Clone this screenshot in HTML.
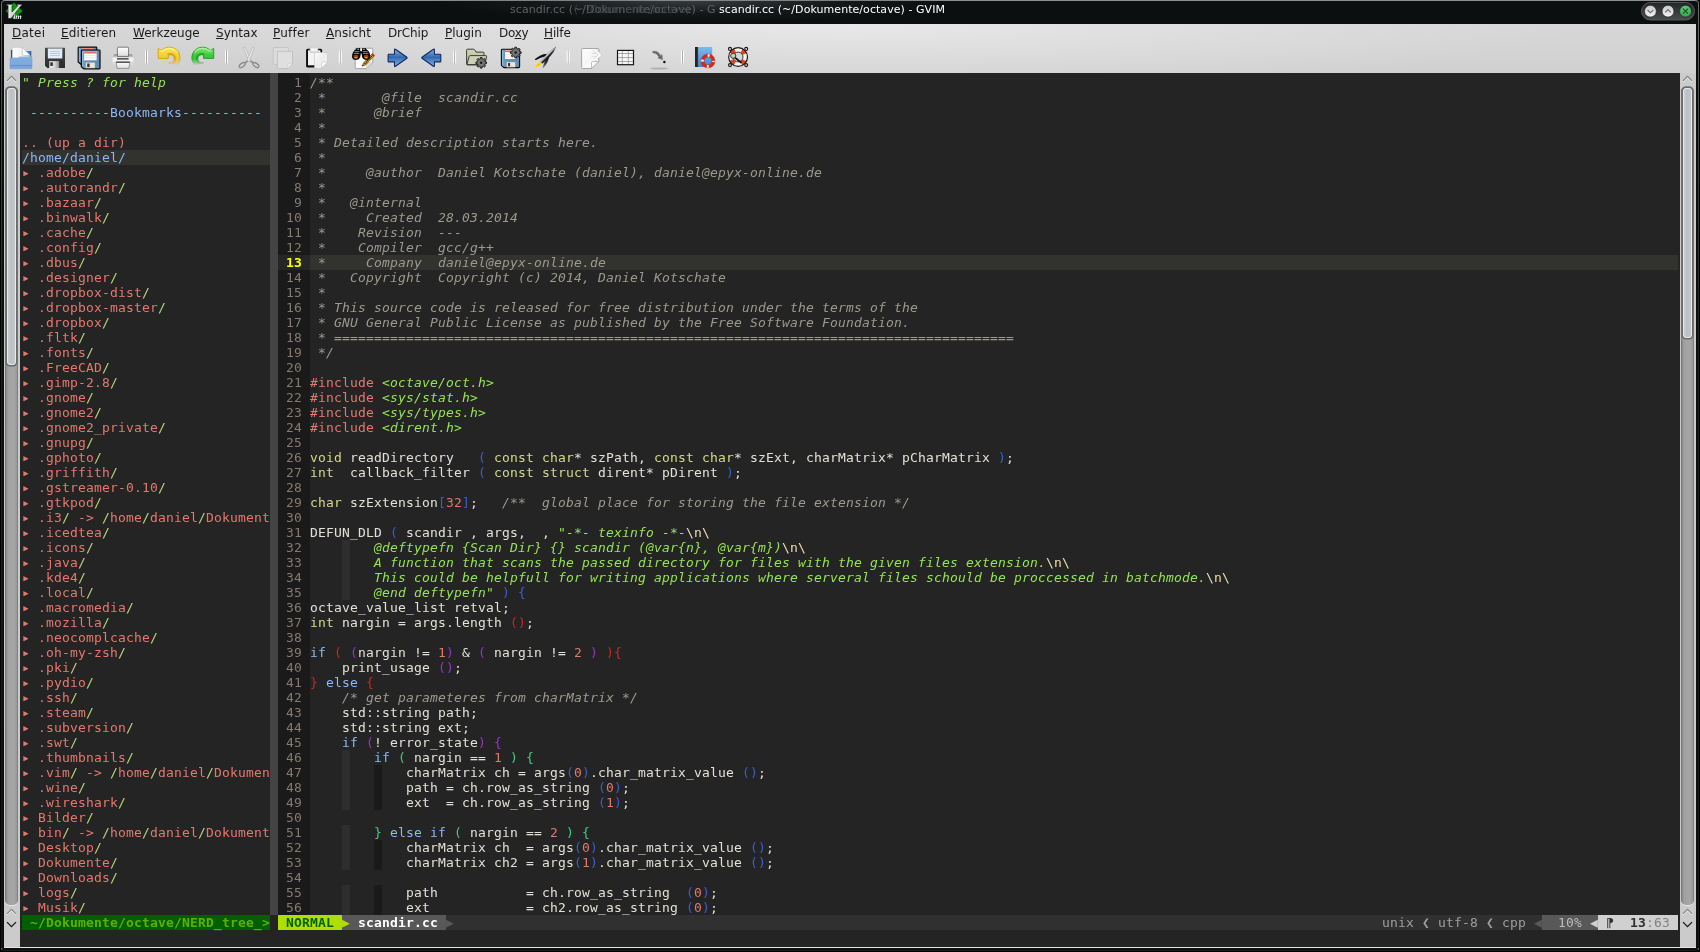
<!DOCTYPE html>
<html><head><meta charset="utf-8"><title>scandir.cc (~/Dokumente/octave) - GVIM</title>
<style>
html,body{margin:0;padding:0;width:1700px;height:952px;overflow:hidden;background:#000}
#win{position:absolute;left:0;top:0;width:1700px;height:952px;background:#020303;overflow:hidden;will-change:transform;filter:grayscale(0)}
#frame{position:absolute;left:1px;top:0;width:1696px;height:949px;border:1px solid #6a6e6f;border-top-color:#8c8f90;border-bottom-color:#181c1d;border-radius:4px 4px 3px 3px;background:#0c0f10}
.fade{position:absolute;top:6px;width:1px;height:942px;background:linear-gradient(rgba(12,15,16,0) 0,rgba(12,15,16,.35) 90px,rgba(12,15,16,.8) 330px,rgba(12,15,16,.93) 100%)}
#title{position:absolute;left:0;top:0;width:1700px;height:24px}
#title .glow{position:absolute;left:430px;top:0;width:520px;height:24px;background:radial-gradient(ellipse 260px 22px at 50% 0,rgba(120,125,128,.42),rgba(60,64,66,.18) 60%,rgba(0,0,0,0) 100%)}
#title .tt{position:absolute;top:2px;height:16px;font:11px/16px "DejaVu Sans","Liberation Sans",sans-serif;letter-spacing:.055px;white-space:pre}
#chrome{position:absolute;left:4px;top:24px;width:1692px;height:924px;background:#d4d4d4;border-bottom:1px solid #e4e4e4;border-right:1px solid #dcdcdc;box-sizing:border-box}
#menubar{position:absolute;left:0;top:0;width:1692px;height:49px;background:radial-gradient(ellipse 720px 70px at 50% 0,rgba(232,232,232,1),rgba(226,226,226,.6) 50%,rgba(220,220,220,0) 100%),linear-gradient(#d7d7d7,#d0d0d0)}
.mi{position:absolute;top:1px;height:16px;font:12px/16px "DejaVu Sans","Liberation Sans",sans-serif;color:#1a1a1a;white-space:pre}
.mi u{text-decoration:underline;text-underline-offset:1px}
.ic{position:absolute;top:23px;width:22px;height:22px}
.sep{position:absolute;top:25px;width:2px;height:17px;background:linear-gradient(90deg,#bdbdbd 0 1px,#ececec 1px 2px);border-radius:1px}
#ed{position:absolute;left:20px;top:73px;width:1660px;height:874px;background:#242424}
.r{position:absolute;height:15px;white-space:pre;font:13px/15px "DejaVu Sans Mono","Liberation Mono",monospace;letter-spacing:0.1733px;color:#e3e0d7}
.r span,.r b,.r i{font:inherit}
.r b{font-weight:bold}
.c{color:#9c998e;font-style:italic!important}
.s{color:#95e454;font-style:italic!important}
.g{color:#95e454;font-weight:normal!important}
.t{color:#d4d987}.k{color:#88b8f6}.n{color:#e5786d}.d{color:#e5786d}.sp{color:#eadead}
.sl{color:#b9d678;font-style:normal!important}
.pb{color:#3a5fcd}.pr{color:#cd2626}.pv{color:#9a32cd}.pg{color:#43cd80}
.ln{color:#857b6f;text-align:right}
.bx{position:absolute}
</style></head><body><div id="win"><div id="frame"></div><div class="fade" style="left:1px"></div><div class="fade" style="left:1698px"></div>

<div id="title"><div class="glow"></div>
<span class="tt" style="left:510px;color:#5e6365">scandir.cc (~/Dokumente/octave) - G</span>
<span class="tt" style="left:574px;color:#3d4244;font-size:10px">(~/Dokumente/octave)</span>
<span class="tt" style="left:719px;color:#ffffff">scandir.cc (~/Dokumente/octave) - GVIM</span>
<svg style="position:absolute;left:5px;top:1.5px" width="18" height="18" viewBox="0 0 18 18">
<polygon points="9,0.3 17.7,9 9,17.7 0.3,9" fill="#009a00" stroke="#06063a" stroke-width="0.7"/>
<polygon points="9,0.8 17.2,9 9,12 0.8,9" fill="#00a800" opacity=".6"/>
<polygon points="1.7,2.3 8.1,2.3 8.1,3.7 7,3.7 7,10 12.8,3.7 12,3.7 12,2.3 16.9,2.3 16.9,3.7 16,3.7 6,16.5 3.2,16.5 3.2,3.7 1.7,3.7" fill="#d9d9d9" stroke="#1a1a1a" stroke-width="0.6"/>
<polygon points="3.6,3 5.2,3 5.2,16 3.6,16" fill="#f2f2f2" opacity=".7"/>
<text x="8.2" y="16.6" font-family="DejaVu Sans,Liberation Sans,sans-serif" font-size="6.2" font-style="italic" font-weight="bold" fill="#ececec" stroke="#111" stroke-width="0.3" paint-order="stroke">im</text>
</svg>
<svg style="position:absolute;left:1638px;top:0px" width="60" height="24" viewBox="0 0 60 24">
<defs>
<linearGradient id="pill" x1="0" y1="0" x2="0" y2="1"><stop offset="0" stop-color="#232526"/><stop offset="1" stop-color="#4a4c4d"/></linearGradient>
<linearGradient id="wb" x1="0" y1="0" x2="0" y2="1"><stop offset="0" stop-color="#c9c9c9"/><stop offset="1" stop-color="#f4f4f4"/></linearGradient>
<linearGradient id="gb" x1="0" y1="0" x2="0" y2="1"><stop offset="0" stop-color="#5ec878"/><stop offset="1" stop-color="#38a852"/></linearGradient>
</defs>
<rect x="3.5" y="2.5" width="53" height="17.5" rx="8.75" fill="url(#pill)" stroke="#55585a" stroke-width="1"/>
<circle cx="12.4" cy="11.2" r="5.9" fill="url(#wb)" stroke="#1c1c1c" stroke-width="0.6"/>
<circle cx="30" cy="11.2" r="5.9" fill="url(#wb)" stroke="#1c1c1c" stroke-width="0.6"/>
<circle cx="47.5" cy="11.2" r="5.9" fill="url(#gb)" stroke="#2a1418" stroke-width="0.6"/>
<path d="M9.6 10 L12.4 12.8 L15.2 10" fill="none" stroke="#6a6a6a" stroke-width="1.1"/>
<path d="M27.2 12.4 L30 9.6 L32.8 12.4" fill="none" stroke="#6a6a6a" stroke-width="1.1"/>
<path d="M45 8.7 L50 13.7 M50 8.7 L45 13.7" fill="none" stroke="#0d5a22" stroke-width="1.2"/>
</svg>
</div>
<div id="chrome"><div id="menubar">
<span class="mi" style="left:8px;letter-spacing:0.25px"><u>D</u>atei</span>
<span class="mi" style="left:57px;letter-spacing:0.2px"><u>E</u>ditieren</span>
<span class="mi" style="left:129px"><u>W</u>erkzeuge</span>
<span class="mi" style="left:212px"><u>S</u>yntax</span>
<span class="mi" style="left:269px;letter-spacing:0.23px"><u>P</u>uffer</span>
<span class="mi" style="left:322px;letter-spacing:0.1px"><u>A</u>nsicht</span>
<span class="mi" style="left:384px;letter-spacing:-0.15px">DrChip</span>
<span class="mi" style="left:441px"><u>P</u>lugin</span>
<span class="mi" style="left:495px;letter-spacing:-0.3px">Do<u>x</u>y</span>
<span class="mi" style="left:540px;letter-spacing:-0.12px"><u>H</u>ilfe</span>
<svg style="position:absolute;left:0;top:20px" width="800" height="29" viewBox="4 44 800 29"><defs>
<linearGradient id="fold" x1="0" y1="0" x2="0" y2="1"><stop offset="0" stop-color="#9cc0ea"/><stop offset=".12" stop-color="#82addf"/><stop offset="1" stop-color="#7aa6db"/></linearGradient>
<linearGradient id="pap" x1="0" y1="0" x2="1" y2="0"><stop offset="0" stop-color="#ffffff"/><stop offset=".45" stop-color="#f4f4f4"/><stop offset="1" stop-color="#cfcfcf"/></linearGradient>
<linearGradient id="flop" x1="0" y1="0" x2="0" y2="1"><stop offset="0" stop-color="#4a4a4a"/><stop offset="1" stop-color="#2b2b2b"/></linearGradient>
<linearGradient id="shut" x1="0" y1="0" x2="1" y2="0"><stop offset="0" stop-color="#f0f0f0"/><stop offset=".6" stop-color="#d0d0d0"/><stop offset="1" stop-color="#8e8e8e"/></linearGradient>
<linearGradient id="bfl" x1="0" y1="0" x2="1" y2="0"><stop offset="0" stop-color="#a8cbe8"/><stop offset=".14" stop-color="#6b98c0"/><stop offset="1" stop-color="#5d8bb4"/></linearGradient>
<linearGradient id="redl" x1="0" y1="0" x2="0" y2="1"><stop offset="0" stop-color="#f0a090"/><stop offset="1" stop-color="#d85a48"/></linearGradient>
<linearGradient id="prp" x1="0" y1="0" x2="0" y2="1"><stop offset="0" stop-color="#ffffff"/><stop offset="1" stop-color="#dcdce0"/></linearGradient>
<linearGradient id="prb" x1="0" y1="0" x2="0" y2="1"><stop offset="0" stop-color="#8a8a8a"/><stop offset="1" stop-color="#c8c8c8"/></linearGradient>
<linearGradient id="und" x1="0" y1="0" x2="0" y2="1"><stop offset="0" stop-color="#f8ea60"/><stop offset=".5" stop-color="#f3d030"/><stop offset="1" stop-color="#ecc018"/></linearGradient>
<linearGradient id="red" x1="0" y1="0" x2="0" y2="1"><stop offset="0" stop-color="#8ae87a"/><stop offset=".45" stop-color="#3ccc3c"/><stop offset="1" stop-color="#30b830"/></linearGradient>
<linearGradient id="fadeY" x1="0" y1="0" x2="0" y2="1"><stop offset="0" stop-color="#fff"/><stop offset=".62" stop-color="#fff"/><stop offset="1" stop-color="#000"/></linearGradient>
<mask id="mU" maskUnits="userSpaceOnUse" x="150" y="44" width="70" height="28"><rect x="150" y="44" width="70" height="28" fill="url(#fd2)"/></mask>
<linearGradient id="fd2" x1="0" y1="0" x2="0" y2="1"><stop offset="0" stop-color="#fff"/><stop offset=".52" stop-color="#fff"/><stop offset=".775" stop-color="#000"/><stop offset="1" stop-color="#000"/></linearGradient>
<linearGradient id="arw" x1="0" y1="0" x2="0" y2="1"><stop offset="0" stop-color="#8ab6e2"/><stop offset=".48" stop-color="#3366aa"/><stop offset=".56" stop-color="#4378bb"/><stop offset="1" stop-color="#82b2e8"/></linearGradient>
<linearGradient id="pg" x1="0" y1="0" x2="1" y2="1"><stop offset="0" stop-color="#fdfdfd"/><stop offset=".5" stop-color="#ececec"/><stop offset="1" stop-color="#fafafa"/></linearGradient>
<linearGradient id="pg2" x1="0" y1="0" x2="1" y2="1"><stop offset="0" stop-color="#ffffff"/><stop offset=".5" stop-color="#f6f6f6"/><stop offset="1" stop-color="#ffffff"/></linearGradient><linearGradient id="rkb" gradientUnits="userSpaceOnUse" x1="546.6" y1="53.4" x2="549.6" y2="56.4"><stop offset="0" stop-color="#b4b8be"/><stop offset=".18" stop-color="#ffffff"/><stop offset=".42" stop-color="#d4d8dc"/><stop offset=".6" stop-color="#5a5e64"/><stop offset=".8" stop-color="#1c1e22"/><stop offset="1" stop-color="#101012"/></linearGradient><linearGradient id="rkf" x1="0" y1="0" x2="0" y2="1"><stop offset="0" stop-color="#0c0c0c"/><stop offset=".55" stop-color="#2c2e32"/><stop offset="1" stop-color="#8e9298"/></linearGradient><linearGradient id="oliv" x1="0" y1="0" x2="0" y2="1"><stop offset="0" stop-color="#d0d4b8"/><stop offset="1" stop-color="#b4b898"/></linearGradient>
<radialGradient id="gear"><stop offset="0" stop-color="#8c8c8c"/><stop offset="1" stop-color="#5a5a5a"/></radialGradient>
<linearGradient id="book" x1="0" y1="0" x2="0" y2="1"><stop offset="0" stop-color="#7ebaea"/><stop offset="1" stop-color="#3d88d0"/></linearGradient>
<linearGradient id="sepg" x1="0" y1="0" x2="0" y2="1"><stop offset="0" stop-color="#fff" stop-opacity="0"/><stop offset=".25" stop-color="#fff" stop-opacity="1"/><stop offset=".75" stop-color="#fff" stop-opacity="1"/><stop offset="1" stop-color="#fff" stop-opacity="0"/></linearGradient>
<linearGradient id="sepd" x1="0" y1="0" x2="0" y2="1"><stop offset="0" stop-color="#9a9a9a" stop-opacity="0"/><stop offset=".25" stop-color="#a8a8a8" stop-opacity="1"/><stop offset=".75" stop-color="#a8a8a8" stop-opacity="1"/><stop offset="1" stop-color="#9a9a9a" stop-opacity="0"/></linearGradient>
</defs><rect x="146" y="48.5" width="1" height="16.8" fill="url(#sepd)"/><rect x="145" y="48.5" width="1" height="16.8" fill="url(#sepg)"/><rect x="147" y="48.5" width="1" height="16.8" fill="url(#sepg)"/><rect x="226" y="48.5" width="1" height="16.8" fill="url(#sepd)"/><rect x="225" y="48.5" width="1" height="16.8" fill="url(#sepg)"/><rect x="227" y="48.5" width="1" height="16.8" fill="url(#sepg)"/><rect x="339.8" y="48.5" width="1" height="16.8" fill="url(#sepd)"/><rect x="338.8" y="48.5" width="1" height="16.8" fill="url(#sepg)"/><rect x="340.8" y="48.5" width="1" height="16.8" fill="url(#sepg)"/><rect x="454.1" y="48.5" width="1" height="16.8" fill="url(#sepd)"/><rect x="453.1" y="48.5" width="1" height="16.8" fill="url(#sepg)"/><rect x="455.1" y="48.5" width="1" height="16.8" fill="url(#sepg)"/><rect x="567.7" y="48.5" width="1" height="16.8" fill="url(#sepd)"/><rect x="566.7" y="48.5" width="1" height="16.8" fill="url(#sepg)"/><rect x="568.7" y="48.5" width="1" height="16.8" fill="url(#sepg)"/><rect x="682" y="48.5" width="1" height="16.8" fill="url(#sepd)"/><rect x="681" y="48.5" width="1" height="16.8" fill="url(#sepg)"/><rect x="683" y="48.5" width="1" height="16.8" fill="url(#sepg)"/><g>
<path d="M10.9 50 h2 v9 h-2z" fill="#1d4a8c"/><path d="M25.5 51 h5.6 v8 h-5.6z" fill="#4a80c8"/><path d="M30.4 51.2 h0.8 v7 h-0.8z" fill="#1d4a8c"/>
<path d="M12.3 47.3 h10 l7.9 8.6 v3 h-17.9z" fill="url(#pap)" stroke="#b9b9b9" stroke-width="0.5"/>
<path d="M22.3 47.3 v6.2 q0 2 2 2 h5.9z" fill="#fdfdfd" stroke="#a8a8a8" stroke-width="0.5"/>
<path d="M10 58.6 q0-.7 .7-.7 h7.3 l1-.9 h12.3 q.7 0 .7 .7 v10 q0 1-1 1 h-20 q-1 0-1-1z" fill="url(#fold)" stroke="#6f9bd2" stroke-width="0.5"/>
<path d="M10.2 65.6 h21.6" stroke="#5b8cc8" stroke-width="0.9"/>
</g>
<g>
<path d="M45.6 47.8 h18.8 q.6 0 .6 .6 v19 q0 .6-.6 .6 h-17 l-2.4-2.2 v-17.4 q0-.6 .6-.6z" fill="url(#flop)"/>
<rect x="48" y="48.7" width="14.1" height="9.5" fill="#e6eff9" stroke="#c5d3e2" stroke-width="0.4"/>
<path d="M50 51.4 h10 M50 53.5 h10 M50 55.6 h10" stroke="#a3bbd8" stroke-width="0.8"/>
<rect x="49.3" y="61.1" width="9.8" height="6.9" fill="url(#shut)"/>
<rect x="50.3" y="62.3" width="2.5" height="3.6" fill="#2e2e2e"/>
<rect x="60.5" y="61.3" width="1.4" height="2" fill="#222"/>
</g>
<g>
<path d="M79 47.2 h17 q.8 0 .8 .8 v17 h-15 l-3.6-3 v-14 q0-.8 .8-.8z" fill="url(#bfl)" stroke="#0a0a0a" stroke-width="1.2" stroke-linejoin="round"/>
<rect x="81.6" y="48" width="12" height="2.2" fill="url(#redl)"/>
<path d="M82.2 50 h17 q.8 0 .8 .8 v17.2 q0 .8-.8 .8 h-15.5 l-2.3-2 v-16 q0-.8 .8-.8z" fill="url(#bfl)" stroke="#0a0a0a" stroke-width="1.2" stroke-linejoin="round"/>
<rect x="84.2" y="51" width="12.4" height="9.3" fill="#ffffff"/>
<rect x="84.2" y="51" width="12.4" height="2.5" fill="url(#redl)"/>
<path d="M84.2 55.6 h12.4 M84.2 57.8 h12.4" stroke="#dcdcdc" stroke-width="0.7"/>
<rect x="85.7" y="62.4" width="9.3" height="5.7" rx="0.6" fill="#ebe7db" stroke="#9a9a90" stroke-width="0.4"/>
<rect x="87.2" y="63.5" width="2.4" height="3.6" fill="#3a3832"/>
</g>
<g>
<path d="M112.4 57.2 l1.8-3 h17.6 l1.8 3z" fill="url(#prb)"/>
<rect x="112.2" y="57.2" width="21.6" height="5" rx="0.6" fill="#f1f1f1" stroke="#d0d0d0" stroke-width="0.4"/>
<path d="M112.4 62.2 h21.2 l-.6 2.6 h-20z" fill="#dadade"/>
<rect x="117" y="58.1" width="11.6" height="1.5" fill="#4a4a4a"/>
<path d="M117.4 56.4 v-8.2 q0-1 1-1 h9.2 q1 0 1 1 v8.2z" fill="url(#prp)" stroke="#4e4e4e" stroke-width="0.7"/>
<path d="M116.2 62 h13.6 l-.9 6.4 h-11.8z" fill="url(#prp)" stroke="#555" stroke-width="0.5"/>
<path d="M116.2 62.2 h13.6" stroke="#2e2e2e" stroke-width="1.1"/>
</g>
<g mask="url(#mU)"><path d="M158.2 48.5 L161.6 50.4 C164 48 166.5 47.2 169.3 47.2 C173 47.2 176.2 48.8 178.2 51.8 C180 54.5 180.5 58 179.4 61.3 C178.9 62.7 178.2 63.8 177.2 64.8 L168.3 62.9 C170 63 171.6 62.6 172.8 61.5 C174 60.4 174.4 58.8 173.9 57.3 C173.3 55.6 171.6 54.6 169.8 54.7 C169.2 54.7 168.7 54.9 168.3 55.2 L168.3 58.4 L158.2 58.4 Z" fill="url(#und)" stroke="#d2a400" stroke-width="0.9" stroke-linejoin="round"/><path d="M167.4 54.6 C169 53.6 171.2 53.5 172.9 54.5 C174.8 55.7 175.6 57.8 175.1 59.9 C174.7 61.5 173.6 62.8 172.2 63.4" fill="none" stroke="#e8961a" stroke-width="1.8" opacity=".8"/><path d="M160.2 50.3 L162 51.4 C164 49.4 166.6 48.4 169.3 48.4 C172.6 48.4 175.4 49.9 177.2 52.4" fill="none" stroke="#fdf58a" stroke-width="1.1" opacity=".85"/></g>
<g mask="url(#mU)" transform="translate(371.9,0) scale(-1,1)"><path d="M158.2 48.5 L161.6 50.4 C164 48 166.5 47.2 169.3 47.2 C173 47.2 176.2 48.8 178.2 51.8 C180 54.5 180.5 58 179.4 61.3 C178.9 62.7 178.2 63.8 177.2 64.8 L168.3 62.9 C170 63 171.6 62.6 172.8 61.5 C174 60.4 174.4 58.8 173.9 57.3 C173.3 55.6 171.6 54.6 169.8 54.7 C169.2 54.7 168.7 54.9 168.3 55.2 L168.3 58.4 L158.2 58.4 Z" fill="url(#red)" stroke="#1f9a1f" stroke-width="0.9" stroke-linejoin="round"/><path d="M167.4 54.6 C169 53.6 171.2 53.5 172.9 54.5 C174.8 55.7 175.6 57.8 175.1 59.9 C174.7 61.5 173.6 62.8 172.2 63.4" fill="none" stroke="#16aa16" stroke-width="1.8" opacity=".8"/><path d="M160.2 50.3 L162 51.4 C164 49.4 166.6 48.4 169.3 48.4 C172.6 48.4 175.4 49.9 177.2 52.4" fill="none" stroke="#b6f6a6" stroke-width="1.1" opacity=".85"/></g>
<g>
<path d="M243.5 47.6 l1.7-.4 l5.9 13.6 l-1.9 .9z" fill="#ececec" stroke="#adadad" stroke-width="0.6"/>
<path d="M254.4 47.6 l-1.7-.4 l-5.9 13.6 l1.9 .9z" fill="#ececec" stroke="#adadad" stroke-width="0.6"/>
<ellipse cx="242.2" cy="65.1" rx="3.4" ry="1.8" transform="rotate(-36 242.2 65.1)" fill="none" stroke="#8c8c8c" stroke-width="1.3"/>
<ellipse cx="255.9" cy="65.1" rx="3.4" ry="1.8" transform="rotate(36 255.9 65.1)" fill="none" stroke="#8c8c8c" stroke-width="1.3"/>
<path d="M244.8 63.2 l2.9-2.3 M253.3 63.2 l-2.9-2.3" stroke="#8c8c8c" stroke-width="1.7"/>
</g>
<g>
<rect x="273.3" y="47.5" width="15.3" height="16.8" rx="0.8" fill="#dcdcdc" stroke="#bdbdbd" stroke-width="0.7"/>
<path d="M277.4 52 q0-.7 .7-.7 h13.7 q.7 0 .7 .7 v11.6 l-5 4.9 h-9.4 q-.7 0-.7-.7z" fill="#dfdfdf" stroke="#b8b8b8" stroke-width="0.7"/>
<path d="M292.5 63.6 q-3.6-.6-4.3 .4 q-.8 1 -.7 4.5z" fill="#efefef" stroke="#bcbcbc" stroke-width="0.4"/>
</g>
<g>
<path d="M307.6 48.8 h13 q1.5 0 1.5 1.5 v15.7 q0 1.5-1.5 1.5 h-13 q-1.5 0-1.5-1.5 v-15.7 q0-1.5 1.5-1.5z" fill="#0c0c0c"/>
<rect x="308" y="50.3" width="12.4" height="15" fill="#f3f3f3"/>
<path d="M310 52.4 v-4.4 q0-.9 .9-.9 h6.2 q.9 0 .9 .9 v4.4z" fill="#e2e2e2" stroke="#bdbdbd" stroke-width="0.6"/>
<rect x="311.2" y="48.6" width="5.6" height="2.2" fill="#f6f6f6"/>
<path d="M314.5 53.2 q0-.7 .7-.7 h11.7 q.7 0 .7 .7 v8.8 l-6.2 6.5 h-6.2 q-.7 0-.7-.7z" fill="url(#pg)" stroke="#bfbfbf" stroke-width="0.6"/>
<path d="M327.6 62 q-4.4-.6-5.3 .5 q-1 1.1 -.9 6z" fill="#ffffff" stroke="#b0b0b0" stroke-width="0.5"/>
</g>
<g>
<path d="M355.2 49 q0-.8 .8-.8 h16 q.8 0 .8 .8 v13.6 l-6.2 6 h-10.6 q-.8 0-.8-.8z" fill="#fcfcfc" stroke="#9c9c9c" stroke-width="0.9"/>
<path d="M372.8 62.6 l-6.2 6 v-5.2 q0-.8 .8-.8z" fill="#dedede" stroke="#b4b4b4" stroke-width="0.4"/>
<path d="M362.2 66.1 l1.3-3.1 l8.6-9.2 l2.2 2 l-8.7 9.1z" fill="#e8b000" stroke="#1a1a2c" stroke-width="0.6"/>
<path d="M364.6 63.9 l8.3-8.9" stroke="#14143a" stroke-width="1.1" stroke-dasharray="1.2 .7"/>
<path d="M362.2 66.1 l.5-1.3 l.9 .8z" fill="#222"/>
<path d="M371.3 54.7 l1.4-1.5 l2.2 2 l-1.4 1.5z" fill="#e02424"/>
<path d="M356.7 48 h3.3 l.4 3 q.5 1.4 .3 3.2 l-.6 3.3 q-1 2.4-4 2.4 q-3.7 0-4.1-2.9 q-.2-3 1.5-5.4 q1.1-1.6 2.2-2z" fill="#0a0a0a"/>
<path d="M356.7 48 h3.3 l.4 3 q.5 1.4 .3 3.2 l-.6 3.3 q-1 2.4-4 2.4 q-3.7 0-4.1-2.9 q-.2-3 1.5-5.4 q1.1-1.6 2.2-2z" fill="#0a0a0a" transform="translate(722.3,0) scale(-1,1)"/>
<rect x="360" y="51.3" width="2.4" height="2.2" fill="#0a0a0a"/>
<path d="M354.6 51.6 h4.6 M363 51.6 h4.6 M353.8 53.4 h5.4 M363 53.4 h5.4" stroke="#b8b8b8" stroke-width="0.7"/>
<path d="M357.4 49.2 h1.6 M363.2 49.2 h1.6" stroke="#f0f0f0" stroke-width="0.9"/>
<ellipse cx="355.9" cy="56.7" rx="2.4" ry="2" fill="#9c4608"/><ellipse cx="366.2" cy="56.7" rx="2.4" ry="2" fill="#9c4608"/>
<ellipse cx="355.9" cy="57.6" rx="1.5" ry=".8" fill="#dc8a4c"/><ellipse cx="366.2" cy="57.6" rx="1.5" ry=".8" fill="#dc8a4c"/>
</g>
<path d="M388.8 54.2 h5.7 v-4.4 q0-1.3 1-.5 l11.4 8 q.5 .5 0 1 l-11.4 8 q-1 .8-1-.5 v-3.9 h-5.7 q-.7 0-.7-.7 v-6.3 q0-.7 .7-.7z" fill="url(#arw)" stroke="#0f2b62" stroke-width="1.1" stroke-linejoin="round"/>
<path d="M388.8 54.2 h5.7 v-4.4 q0-1.3 1-.5 l11.4 8 q.5 .5 0 1 l-11.4 8 q-1 .8-1-.5 v-3.9 h-5.7 q-.7 0-.7-.7 v-6.3 q0-.7 .7-.7z" fill="url(#arw)" stroke="#0f2b62" stroke-width="1.1" stroke-linejoin="round" transform="translate(828.9,0) scale(-1,1)"/>
<g>
<path d="M466.6 50.2 q0-1 1-1 h6 q.8 0 1.2 .7 l1.2 2.2 h7 q1 0 1 1 v10.8 q0 1-1 1 h-15.4 q-1 0-1-1z" fill="url(#oliv)" stroke="#2c2c28" stroke-width="0.9"/>
<path d="M467 64.3 l2.2-8 q.2-.7 1-.7 h15.6 q1 0 .8 1 l-1.6 7.2 q-.2 .8-1 .8 h-16.4z" fill="#cdd1b4" stroke="#2c2c28" stroke-width="0.9"/>
</g><polygon points="486.53,61.96 486.53,63.64 485.07,63.79 484.64,64.83 485.57,65.97 484.37,67.17 483.23,66.24 482.19,66.67 482.04,68.13 480.36,68.13 480.21,66.67 479.17,66.24 478.03,67.17 476.83,65.97 477.76,64.83 477.33,63.79 475.87,63.64 475.87,61.96 477.33,61.81 477.76,60.77 476.83,59.63 478.03,58.43 479.17,59.36 480.21,58.93 480.36,57.47 482.04,57.47 482.19,58.93 483.23,59.36 484.37,58.43 485.57,59.63 484.64,60.77 485.07,61.81" fill="url(#gear)" stroke="#1e1e1e" stroke-width="0.9" stroke-linejoin="round"/><circle cx="481.2" cy="62.8" r="1.296" fill="#1a1a1a"/>
<g>
<path d="M502.2 49.2 h16.6 q.8 0 .8 .8 v16.8 q0 .8-.8 .8 h-15 l-2.4-2.2 v-15.4 q0-.8 .8-.8z" fill="url(#bfl)" stroke="#0a0a0a" stroke-width="1.1" stroke-linejoin="round"/>
<rect x="505" y="50.2" width="11" height="8.8" fill="#ffffff"/>
<rect x="505" y="50.2" width="11" height="2" fill="url(#redl)"/>
<path d="M505 54.6 h11 M505 56.8 h11" stroke="#dcdcdc" stroke-width="0.7"/>
<rect x="506.5" y="62" width="8.9" height="5.2" rx="0.5" fill="#ebe7db" stroke="#8c8c84" stroke-width="0.4"/>
<rect x="508" y="63" width="2.1" height="3.3" fill="#3a3832"/>
</g><polygon points="521.13,51.74 521.13,53.46 519.64,53.61 519.20,54.67 520.15,55.83 518.93,57.05 517.77,56.10 516.71,56.54 516.56,58.03 514.84,58.03 514.69,56.54 513.63,56.10 512.47,57.05 511.25,55.83 512.20,54.67 511.76,53.61 510.27,53.46 510.27,51.74 511.76,51.59 512.20,50.53 511.25,49.37 512.47,48.15 513.63,49.10 514.69,48.66 514.84,47.17 516.56,47.17 516.71,48.66 517.77,49.10 518.93,48.15 520.15,49.37 519.20,50.53 519.64,51.59" fill="url(#gear)" stroke="#1e1e1e" stroke-width="0.9" stroke-linejoin="round"/><circle cx="515.7" cy="52.6" r="1.32" fill="#1a1a1a"/>
<g>
<path d="M540.6 62 Q537.2 62.6 534.9 67.1 Q538.4 67.8 542 63.4z" fill="#f8d818"/>
<path d="M540.4 63.2 Q538.6 64.2 537.6 66" stroke="#f0a818" stroke-width="0.8" fill="none"/>
<path d="M546.8 53.7 Q540 54.4 534.7 59.3 Q535 60.4 536.1 60 Q541 57.3 545.4 56.3z" fill="#101010"/>
<path d="M549.1 56.4 Q548.6 62 543.4 68 Q542.4 67.8 542.7 66.9 Q544.6 62 545.5 59.4z" fill="url(#rkf)"/>
<path d="M555.8 46.9 Q551 49.9 546.9 54.4 Q543 58.6 540.4 61.6 L542.4 63.4 Q546 60.8 549.9 56.6 Q554 52 555.8 46.9z" fill="url(#rkb)" stroke="#3a3e44" stroke-width="0.35"/>
</g>
<g>
<path d="M581.6 49.3 q0-.8 .8-.8 h15.6 q.8 0 .8 .8 v12.2 l-7.3 7 h-9.1 q-.8 0-.8-.8z" fill="url(#pg2)" stroke="#9e9e9e" stroke-width="0.9"/>
<path d="M598.8 61.5 l-7.3 7 v-5.6 q0-1.4 1.4-1.4z" fill="#ffffff" stroke="#a6a6a6" stroke-width="0.7"/>
<path d="M591.6 53.3 h4.6 M591.6 56.4 h4.6" stroke="#d2d2d2" stroke-width="0.7"/>
<path d="M594.3 49.5 l5.7 5.4 l-5.7 5.4" fill="none" stroke="#c4c4c4" stroke-width="2.9" stroke-linejoin="miter"/>
<path d="M594.3 49.5 l5.7 5.4 l-5.7 5.4" fill="none" stroke="#ffffff" stroke-width="1.9" stroke-linejoin="miter"/>
</g>
<g>
<rect x="617.5" y="50.4" width="16" height="14.3" fill="#f6f6f6" stroke="#161616" stroke-width="1.2"/>
<path d="M622.3 51 v13 M628.3 51 v13" stroke="#909090" stroke-width="0.7"/>
<path d="M618 53.5 h15 M618 57.6 h15 M618 61.5 h15" stroke="#888888" stroke-width="0.7"/>
</g>
<g>
<path d="M652.6 51.2 q5.2-.8 8 4.2 l1.4-1 l.8 5.4 l-5.2-1.8 l1.3-1 q-2-3.6-6.3-4.2z" fill="#5c5c5c" stroke="#8a8a8a" stroke-width="0.5" opacity=".92"/>
<circle cx="664.4" cy="62.1" r="1.25" fill="#111"/>
<ellipse cx="659" cy="68.5" rx="9" ry="0.9" fill="#8e8e8e" opacity=".55"/>
</g>
<g>
<rect x="698" y="47" width="14.2" height="20" fill="url(#book)"/>
<rect x="695" y="47" width="3" height="20" fill="#262626"/>
<path d="M697.8 47.6 v19" stroke="#5a5a5a" stroke-width="0.4"/>
<circle cx="708" cy="61" r="5.45" fill="none" stroke="#e02416" stroke-width="3.1"/>
<circle cx="708" cy="61" r="5.45" fill="none" stroke="#eef8fa" stroke-width="3.1" stroke-dasharray="2 6.56" stroke-dashoffset="1"/>
<circle cx="708" cy="61" r="7" fill="none" stroke="#b01408" stroke-width="0.5" opacity=".7"/><circle cx="708" cy="61" r="3.9" fill="none" stroke="#b01408" stroke-width="0.5" opacity=".7"/>
</g>
<g>
<circle cx="730" cy="48.9" r="1.5" fill="none" stroke="#1a1a1a" stroke-width="1.1"/><circle cx="746.2" cy="48.9" r="1.5" fill="none" stroke="#1a1a1a" stroke-width="1.1"/>
<circle cx="730" cy="65.1" r="1.5" fill="none" stroke="#1a1a1a" stroke-width="1.1"/><circle cx="746.2" cy="65.1" r="1.5" fill="none" stroke="#1a1a1a" stroke-width="1.1"/>
<circle cx="738.1" cy="57" r="7.2" fill="none" stroke="#f7f5f1" stroke-width="4.6"/>
<circle cx="738.1" cy="57" r="7.2" fill="none" stroke="#e2441c" stroke-width="4.6" stroke-dasharray="4.6 6.71" stroke-dashoffset="-3.35"/>
<circle cx="738.1" cy="57" r="9.4" fill="none" stroke="#1a1a1a" stroke-width="1.2"/>
<circle cx="738.1" cy="57" r="4.9" fill="#d6d6d6" stroke="#2c2c2c" stroke-width="0.9"/>
<path d="M735 57.6 l6.4 5.2" stroke="#0e0e0e" stroke-width="1.8"/>
<circle cx="733.2" cy="55.8" r="2.6" fill="#c9cdb4" stroke="#222" stroke-width="0.9"/>
</g></svg>
</div>
<div style="position:absolute;left:0px;top:49px;width:16px;height:874px;background:#cbcbcb"></div>
<div style="position:absolute;left:1px;top:62px;width:13px;height:819px;border-radius:5px;background:linear-gradient(90deg,#6f6f6f 0,#8e8e8e 1.5px,#a1a1a1 3px,#a6a6a6 9px,#9a9a9a 11.5px,#747474 13px);box-shadow:0 1px 0 #e6e6e6"></div>
<div style="position:absolute;left:1676px;top:49px;width:16px;height:874px;background:#cbcbcb"></div>
<div style="position:absolute;left:1677px;top:62px;width:13px;height:819px;border-radius:5px;background:linear-gradient(90deg,#6f6f6f 0,#8e8e8e 1.5px,#a1a1a1 3px,#a6a6a6 9px,#9a9a9a 11.5px,#747474 13px);box-shadow:0 1px 0 #e6e6e6"></div>
<div style="position:absolute;left:3px;top:64px;width:7px;height:275px;border:1px solid #e9e9e9;border-radius:3px;background:linear-gradient(90deg,#c9cccf,#bcc0c3 50%,#c6c9cc);box-shadow:0 0 0 1.5px #6b6b6b"></div>
<div style="position:absolute;left:1679px;top:64px;width:7px;height:248px;border:1px solid #e9e9e9;border-radius:3px;background:linear-gradient(90deg,#c9cccf,#bcc0c3 50%,#c6c9cc);box-shadow:0 0 0 1.5px #6b6b6b"></div>
<svg style="position:absolute;left:0;top:0" width="1692" height="924" viewBox="0 0 1692 924"><path d="M3 56.9 L7.5 52.3 L12 56.9" transform="translate(0,1)" fill="none" stroke="#f2f2f2" stroke-width="1.2"/><path d="M3 56.9 L7.5 52.3 L12 56.9" fill="none" stroke="#7f7f7f" stroke-width="1.25"/><path d="M3 889.9 L7.5 885.3 L12 889.9" transform="translate(0,1)" fill="none" stroke="#f2f2f2" stroke-width="1.2"/><path d="M3 889.9 L7.5 885.3 L12 889.9" fill="none" stroke="#858585" stroke-width="1.25"/><path d="M3 898.1 L7.5 902.7 L12 898.1" fill="none" stroke="#151515" stroke-width="1.25"/><path d="M1679 56.9 L1683.5 52.3 L1688 56.9" transform="translate(0,1)" fill="none" stroke="#f2f2f2" stroke-width="1.2"/><path d="M1679 56.9 L1683.5 52.3 L1688 56.9" fill="none" stroke="#7f7f7f" stroke-width="1.25"/><path d="M1679 889.9 L1683.5 885.3 L1688 889.9" transform="translate(0,1)" fill="none" stroke="#f2f2f2" stroke-width="1.2"/><path d="M1679 889.9 L1683.5 885.3 L1688 889.9" fill="none" stroke="#858585" stroke-width="1.25"/><path d="M1679 898.1 L1683.5 902.7 L1688 898.1" fill="none" stroke="#151515" stroke-width="1.25"/></svg>
</div>
<div id="ed">
<div class="bx" style="left:250px;top:0px;width:8px;height:842px;background:#444444"></div>
<div class="bx" style="left:258px;top:0px;width:32px;height:842px;background:#1a1a1a"></div>
<div class="bx" style="left:2px;top:77px;width:248px;height:15px;background:#32322e"></div>
<div class="bx" style="left:258px;top:182px;width:32px;height:15px;background:#262626"></div>
<div class="bx" style="left:290px;top:182px;width:1368px;height:15px;background:#32322e"></div>
<div class="bx" style="left:322px;top:467px;width:8px;height:15px;background:#2e2e2e"></div>
<div class="bx" style="left:322px;top:482px;width:8px;height:15px;background:#2e2e2e"></div>
<div class="bx" style="left:322px;top:497px;width:8px;height:15px;background:#2e2e2e"></div>
<div class="bx" style="left:322px;top:512px;width:8px;height:15px;background:#2e2e2e"></div>
<div class="bx" style="left:322px;top:677px;width:8px;height:15px;background:#2e2e2e"></div>
<div class="bx" style="left:322px;top:692px;width:8px;height:15px;background:#2e2e2e"></div>
<div class="bx" style="left:322px;top:707px;width:8px;height:15px;background:#2e2e2e"></div>
<div class="bx" style="left:322px;top:722px;width:8px;height:15px;background:#2e2e2e"></div>
<div class="bx" style="left:322px;top:752px;width:8px;height:15px;background:#2e2e2e"></div>
<div class="bx" style="left:322px;top:767px;width:8px;height:15px;background:#2e2e2e"></div>
<div class="bx" style="left:322px;top:782px;width:8px;height:15px;background:#2e2e2e"></div>
<div class="bx" style="left:322px;top:812px;width:8px;height:15px;background:#2e2e2e"></div>
<div class="bx" style="left:322px;top:827px;width:8px;height:15px;background:#2e2e2e"></div>
<div class="bx" style="left:354px;top:692px;width:8px;height:15px;background:#1a1a1a"></div>
<div class="bx" style="left:354px;top:707px;width:8px;height:15px;background:#1a1a1a"></div>
<div class="bx" style="left:354px;top:722px;width:8px;height:15px;background:#1a1a1a"></div>
<div class="bx" style="left:354px;top:767px;width:8px;height:15px;background:#1a1a1a"></div>
<div class="bx" style="left:354px;top:782px;width:8px;height:15px;background:#1a1a1a"></div>
<div class="bx" style="left:354px;top:812px;width:8px;height:15px;background:#1a1a1a"></div>
<div class="bx" style="left:354px;top:827px;width:8px;height:15px;background:#1a1a1a"></div>
<div class="r" style="left:2px;top:2px;width:248px"><b class="g">"</b><span class="s"> Press ? for help</span></div>
<div class="r" style="left:2px;top:32px;width:248px"><span class="k"> ----------Bookmarks----------</span></div>
<div class="r" style="left:2px;top:62px;width:248px"><span class="d">.. (up a dir)</span></div>
<div class="r" style="left:2px;top:77px;width:248px"><span class="k">/home/daniel/</span></div>
<div class="r" style="left:2px;top:92px;width:248px"><span class="d">▸ .adobe<i class="sl">/</i></span></div>
<div class="r" style="left:2px;top:107px;width:248px"><span class="d">▸ .autorandr<i class="sl">/</i></span></div>
<div class="r" style="left:2px;top:122px;width:248px"><span class="d">▸ .bazaar<i class="sl">/</i></span></div>
<div class="r" style="left:2px;top:137px;width:248px"><span class="d">▸ .binwalk<i class="sl">/</i></span></div>
<div class="r" style="left:2px;top:152px;width:248px"><span class="d">▸ .cache<i class="sl">/</i></span></div>
<div class="r" style="left:2px;top:167px;width:248px"><span class="d">▸ .config<i class="sl">/</i></span></div>
<div class="r" style="left:2px;top:182px;width:248px"><span class="d">▸ .dbus<i class="sl">/</i></span></div>
<div class="r" style="left:2px;top:197px;width:248px"><span class="d">▸ .designer<i class="sl">/</i></span></div>
<div class="r" style="left:2px;top:212px;width:248px"><span class="d">▸ .dropbox-dist<i class="sl">/</i></span></div>
<div class="r" style="left:2px;top:227px;width:248px"><span class="d">▸ .dropbox-master<i class="sl">/</i></span></div>
<div class="r" style="left:2px;top:242px;width:248px"><span class="d">▸ .dropbox<i class="sl">/</i></span></div>
<div class="r" style="left:2px;top:257px;width:248px"><span class="d">▸ .fltk<i class="sl">/</i></span></div>
<div class="r" style="left:2px;top:272px;width:248px"><span class="d">▸ .fonts<i class="sl">/</i></span></div>
<div class="r" style="left:2px;top:287px;width:248px"><span class="d">▸ .FreeCAD<i class="sl">/</i></span></div>
<div class="r" style="left:2px;top:302px;width:248px"><span class="d">▸ .gimp-2.8<i class="sl">/</i></span></div>
<div class="r" style="left:2px;top:317px;width:248px"><span class="d">▸ .gnome<i class="sl">/</i></span></div>
<div class="r" style="left:2px;top:332px;width:248px"><span class="d">▸ .gnome2<i class="sl">/</i></span></div>
<div class="r" style="left:2px;top:347px;width:248px"><span class="d">▸ .gnome2_private<i class="sl">/</i></span></div>
<div class="r" style="left:2px;top:362px;width:248px"><span class="d">▸ .gnupg<i class="sl">/</i></span></div>
<div class="r" style="left:2px;top:377px;width:248px"><span class="d">▸ .gphoto<i class="sl">/</i></span></div>
<div class="r" style="left:2px;top:392px;width:248px"><span class="d">▸ .griffith<i class="sl">/</i></span></div>
<div class="r" style="left:2px;top:407px;width:248px"><span class="d">▸ .gstreamer-0.10<i class="sl">/</i></span></div>
<div class="r" style="left:2px;top:422px;width:248px"><span class="d">▸ .gtkpod<i class="sl">/</i></span></div>
<div class="r" style="left:2px;top:437px;width:248px"><span class="d">▸ .i3<i class="sl">/</i> -&gt; <i class="sl">/</i>home<i class="sl">/</i>daniel<i class="sl">/</i>Dokument</span></div>
<div class="r" style="left:2px;top:452px;width:248px"><span class="d">▸ .icedtea<i class="sl">/</i></span></div>
<div class="r" style="left:2px;top:467px;width:248px"><span class="d">▸ .icons<i class="sl">/</i></span></div>
<div class="r" style="left:2px;top:482px;width:248px"><span class="d">▸ .java<i class="sl">/</i></span></div>
<div class="r" style="left:2px;top:497px;width:248px"><span class="d">▸ .kde4<i class="sl">/</i></span></div>
<div class="r" style="left:2px;top:512px;width:248px"><span class="d">▸ .local<i class="sl">/</i></span></div>
<div class="r" style="left:2px;top:527px;width:248px"><span class="d">▸ .macromedia<i class="sl">/</i></span></div>
<div class="r" style="left:2px;top:542px;width:248px"><span class="d">▸ .mozilla<i class="sl">/</i></span></div>
<div class="r" style="left:2px;top:557px;width:248px"><span class="d">▸ .neocomplcache<i class="sl">/</i></span></div>
<div class="r" style="left:2px;top:572px;width:248px"><span class="d">▸ .oh-my-zsh<i class="sl">/</i></span></div>
<div class="r" style="left:2px;top:587px;width:248px"><span class="d">▸ .pki<i class="sl">/</i></span></div>
<div class="r" style="left:2px;top:602px;width:248px"><span class="d">▸ .pydio<i class="sl">/</i></span></div>
<div class="r" style="left:2px;top:617px;width:248px"><span class="d">▸ .ssh<i class="sl">/</i></span></div>
<div class="r" style="left:2px;top:632px;width:248px"><span class="d">▸ .steam<i class="sl">/</i></span></div>
<div class="r" style="left:2px;top:647px;width:248px"><span class="d">▸ .subversion<i class="sl">/</i></span></div>
<div class="r" style="left:2px;top:662px;width:248px"><span class="d">▸ .swt<i class="sl">/</i></span></div>
<div class="r" style="left:2px;top:677px;width:248px"><span class="d">▸ .thumbnails<i class="sl">/</i></span></div>
<div class="r" style="left:2px;top:692px;width:248px"><span class="d">▸ .vim<i class="sl">/</i> -&gt; <i class="sl">/</i>home<i class="sl">/</i>daniel<i class="sl">/</i>Dokumen</span></div>
<div class="r" style="left:2px;top:707px;width:248px"><span class="d">▸ .wine<i class="sl">/</i></span></div>
<div class="r" style="left:2px;top:722px;width:248px"><span class="d">▸ .wireshark<i class="sl">/</i></span></div>
<div class="r" style="left:2px;top:737px;width:248px"><span class="d">▸ Bilder<i class="sl">/</i></span></div>
<div class="r" style="left:2px;top:752px;width:248px"><span class="d">▸ bin<i class="sl">/</i> -&gt; <i class="sl">/</i>home<i class="sl">/</i>daniel<i class="sl">/</i>Dokument</span></div>
<div class="r" style="left:2px;top:767px;width:248px"><span class="d">▸ Desktop<i class="sl">/</i></span></div>
<div class="r" style="left:2px;top:782px;width:248px"><span class="d">▸ Dokumente<i class="sl">/</i></span></div>
<div class="r" style="left:2px;top:797px;width:248px"><span class="d">▸ Downloads<i class="sl">/</i></span></div>
<div class="r" style="left:2px;top:812px;width:248px"><span class="d">▸ logs<i class="sl">/</i></span></div>
<div class="r" style="left:2px;top:827px;width:248px"><span class="d">▸ Musik<i class="sl">/</i></span></div>
<div class="r" style="left:258px;top:2px;width:32px;color:#857b6f">  1</div>
<div class="r" style="left:290px;top:2px;width:1368px"><span class="c">/**</span></div>
<div class="r" style="left:258px;top:17px;width:32px;color:#857b6f">  2</div>
<div class="r" style="left:290px;top:17px;width:1368px"><span class="c"> *       @file  scandir.cc</span></div>
<div class="r" style="left:258px;top:32px;width:32px;color:#857b6f">  3</div>
<div class="r" style="left:290px;top:32px;width:1368px"><span class="c"> *      @brief</span></div>
<div class="r" style="left:258px;top:47px;width:32px;color:#857b6f">  4</div>
<div class="r" style="left:290px;top:47px;width:1368px"><span class="c"> *</span></div>
<div class="r" style="left:258px;top:62px;width:32px;color:#857b6f">  5</div>
<div class="r" style="left:290px;top:62px;width:1368px"><span class="c"> * Detailed description starts here.</span></div>
<div class="r" style="left:258px;top:77px;width:32px;color:#857b6f">  6</div>
<div class="r" style="left:290px;top:77px;width:1368px"><span class="c"> *</span></div>
<div class="r" style="left:258px;top:92px;width:32px;color:#857b6f">  7</div>
<div class="r" style="left:290px;top:92px;width:1368px"><span class="c"> *     @author  Daniel Kotschate (daniel), daniel@epyx-online.de</span></div>
<div class="r" style="left:258px;top:107px;width:32px;color:#857b6f">  8</div>
<div class="r" style="left:290px;top:107px;width:1368px"><span class="c"> *</span></div>
<div class="r" style="left:258px;top:122px;width:32px;color:#857b6f">  9</div>
<div class="r" style="left:290px;top:122px;width:1368px"><span class="c"> *   @internal</span></div>
<div class="r" style="left:258px;top:137px;width:32px;color:#857b6f"> 10</div>
<div class="r" style="left:290px;top:137px;width:1368px"><span class="c"> *     Created  28.03.2014</span></div>
<div class="r" style="left:258px;top:152px;width:32px;color:#857b6f"> 11</div>
<div class="r" style="left:290px;top:152px;width:1368px"><span class="c"> *    Revision  ---</span></div>
<div class="r" style="left:258px;top:167px;width:32px;color:#857b6f"> 12</div>
<div class="r" style="left:290px;top:167px;width:1368px"><span class="c"> *    Compiler  gcc/g++</span></div>
<div class="r" style="left:258px;top:182px;width:32px;color:#ffff00;font-weight:bold"> 13</div>
<div class="r" style="left:290px;top:182px;width:1368px"><span class="c"> *     Company  daniel@epyx-online.de</span></div>
<div class="r" style="left:258px;top:197px;width:32px;color:#857b6f"> 14</div>
<div class="r" style="left:290px;top:197px;width:1368px"><span class="c"> *   Copyright  Copyright (c) 2014, Daniel Kotschate</span></div>
<div class="r" style="left:258px;top:212px;width:32px;color:#857b6f"> 15</div>
<div class="r" style="left:290px;top:212px;width:1368px"><span class="c"> *</span></div>
<div class="r" style="left:258px;top:227px;width:32px;color:#857b6f"> 16</div>
<div class="r" style="left:290px;top:227px;width:1368px"><span class="c"> * This source code is released for free distribution under the terms of the</span></div>
<div class="r" style="left:258px;top:242px;width:32px;color:#857b6f"> 17</div>
<div class="r" style="left:290px;top:242px;width:1368px"><span class="c"> * GNU General Public License as published by the Free Software Foundation.</span></div>
<div class="r" style="left:258px;top:257px;width:32px;color:#857b6f"> 18</div>
<div class="r" style="left:290px;top:257px;width:1368px"><span class="c"> * =====================================================================================</span></div>
<div class="r" style="left:258px;top:272px;width:32px;color:#857b6f"> 19</div>
<div class="r" style="left:290px;top:272px;width:1368px"><span class="c"> */</span></div>
<div class="r" style="left:258px;top:287px;width:32px;color:#857b6f"> 20</div>
<div class="r" style="left:258px;top:302px;width:32px;color:#857b6f"> 21</div>
<div class="r" style="left:290px;top:302px;width:1368px"><span class="d">#include </span><span class="s">&lt;octave/oct.h&gt;</span></div>
<div class="r" style="left:258px;top:317px;width:32px;color:#857b6f"> 22</div>
<div class="r" style="left:290px;top:317px;width:1368px"><span class="d">#include </span><span class="s">&lt;sys/stat.h&gt;</span></div>
<div class="r" style="left:258px;top:332px;width:32px;color:#857b6f"> 23</div>
<div class="r" style="left:290px;top:332px;width:1368px"><span class="d">#include </span><span class="s">&lt;sys/types.h&gt;</span></div>
<div class="r" style="left:258px;top:347px;width:32px;color:#857b6f"> 24</div>
<div class="r" style="left:290px;top:347px;width:1368px"><span class="d">#include </span><span class="s">&lt;dirent.h&gt;</span></div>
<div class="r" style="left:258px;top:362px;width:32px;color:#857b6f"> 25</div>
<div class="r" style="left:258px;top:377px;width:32px;color:#857b6f"> 26</div>
<div class="r" style="left:290px;top:377px;width:1368px"><span class="t">void</span> readDirectory   <span class="pb">(</span> <span class="t">const</span> <span class="t">char</span>* szPath, <span class="t">const</span> <span class="t">char</span>* szExt, charMatrix* pCharMatrix <span class="pb">)</span>;</div>
<div class="r" style="left:258px;top:392px;width:32px;color:#857b6f"> 27</div>
<div class="r" style="left:290px;top:392px;width:1368px"><span class="t">int</span>  callback_filter <span class="pb">(</span> <span class="t">const</span> <span class="t">struct</span> dirent* pDirent <span class="pb">)</span>;</div>
<div class="r" style="left:258px;top:407px;width:32px;color:#857b6f"> 28</div>
<div class="r" style="left:258px;top:422px;width:32px;color:#857b6f"> 29</div>
<div class="r" style="left:290px;top:422px;width:1368px"><span class="t">char</span> szExtension<span class="pb">[</span><span class="n">32</span><span class="pb">]</span>;   <span class="c">/**  global place for storing the file extension */</span></div>
<div class="r" style="left:258px;top:437px;width:32px;color:#857b6f"> 30</div>
<div class="r" style="left:258px;top:452px;width:32px;color:#857b6f"> 31</div>
<div class="r" style="left:290px;top:452px;width:1368px">DEFUN_DLD <span class="pb">(</span> scandir , args,  , <span class="s">"-*- texinfo -*-</span><span class="sp">\n\</span></div>
<div class="r" style="left:258px;top:467px;width:32px;color:#857b6f"> 32</div>
<div class="r" style="left:290px;top:467px;width:1368px">        <span class="s">@deftypefn {Scan Dir} {} scandir (@var{n}, @var{m})</span><span class="sp">\n\</span></div>
<div class="r" style="left:258px;top:482px;width:32px;color:#857b6f"> 33</div>
<div class="r" style="left:290px;top:482px;width:1368px">        <span class="s">A function that scans the passed directory for files with the given files extension.</span><span class="sp">\n\</span></div>
<div class="r" style="left:258px;top:497px;width:32px;color:#857b6f"> 34</div>
<div class="r" style="left:290px;top:497px;width:1368px">        <span class="s">This could be helpfull for writing applications where serveral files schould be proccessed in batchmode.</span><span class="sp">\n\</span></div>
<div class="r" style="left:258px;top:512px;width:32px;color:#857b6f"> 35</div>
<div class="r" style="left:290px;top:512px;width:1368px">        <span class="s">@end deftypefn"</span> <span class="pb">)</span> <span class="pb">{</span></div>
<div class="r" style="left:258px;top:527px;width:32px;color:#857b6f"> 36</div>
<div class="r" style="left:290px;top:527px;width:1368px">octave_value_list retval;</div>
<div class="r" style="left:258px;top:542px;width:32px;color:#857b6f"> 37</div>
<div class="r" style="left:290px;top:542px;width:1368px"><span class="t">int</span> nargin = args.length <span class="pr">()</span>;</div>
<div class="r" style="left:258px;top:557px;width:32px;color:#857b6f"> 38</div>
<div class="r" style="left:258px;top:572px;width:32px;color:#857b6f"> 39</div>
<div class="r" style="left:290px;top:572px;width:1368px"><span class="k">if</span> <span class="pr">(</span> <span class="pv">(</span>nargin != <span class="n">1</span><span class="pv">)</span> &amp; <span class="pv">(</span> nargin != <span class="n">2</span> <span class="pv">)</span> <span class="pr">){</span></div>
<div class="r" style="left:258px;top:587px;width:32px;color:#857b6f"> 40</div>
<div class="r" style="left:290px;top:587px;width:1368px">    print_usage <span class="pv">()</span>;</div>
<div class="r" style="left:258px;top:602px;width:32px;color:#857b6f"> 41</div>
<div class="r" style="left:290px;top:602px;width:1368px"><span class="pr">}</span> <span class="k">else</span> <span class="pr">{</span></div>
<div class="r" style="left:258px;top:617px;width:32px;color:#857b6f"> 42</div>
<div class="r" style="left:290px;top:617px;width:1368px">    <span class="c">/* get parameteres from charMatrix */</span></div>
<div class="r" style="left:258px;top:632px;width:32px;color:#857b6f"> 43</div>
<div class="r" style="left:290px;top:632px;width:1368px">    std::string path;</div>
<div class="r" style="left:258px;top:647px;width:32px;color:#857b6f"> 44</div>
<div class="r" style="left:290px;top:647px;width:1368px">    std::string ext;</div>
<div class="r" style="left:258px;top:662px;width:32px;color:#857b6f"> 45</div>
<div class="r" style="left:290px;top:662px;width:1368px">    <span class="k">if</span> <span class="pv">(</span>! error_state<span class="pv">)</span> <span class="pv">{</span></div>
<div class="r" style="left:258px;top:677px;width:32px;color:#857b6f"> 46</div>
<div class="r" style="left:290px;top:677px;width:1368px">        <span class="k">if</span> <span class="pg">(</span> nargin == <span class="n">1</span> <span class="pg">)</span> <span class="pg">{</span></div>
<div class="r" style="left:258px;top:692px;width:32px;color:#857b6f"> 47</div>
<div class="r" style="left:290px;top:692px;width:1368px">            charMatrix ch = args<span class="pb">(</span><span class="n">0</span><span class="pb">)</span>.char_matrix_value <span class="pb">()</span>;</div>
<div class="r" style="left:258px;top:707px;width:32px;color:#857b6f"> 48</div>
<div class="r" style="left:290px;top:707px;width:1368px">            path = ch.row_as_string <span class="pb">(</span><span class="n">0</span><span class="pb">)</span>;</div>
<div class="r" style="left:258px;top:722px;width:32px;color:#857b6f"> 49</div>
<div class="r" style="left:290px;top:722px;width:1368px">            ext  = ch.row_as_string <span class="pb">(</span><span class="n">1</span><span class="pb">)</span>;</div>
<div class="r" style="left:258px;top:737px;width:32px;color:#857b6f"> 50</div>
<div class="r" style="left:258px;top:752px;width:32px;color:#857b6f"> 51</div>
<div class="r" style="left:290px;top:752px;width:1368px">        <span class="pg">}</span> <span class="k">else</span> <span class="k">if</span> <span class="pg">(</span> nargin == <span class="n">2</span> <span class="pg">)</span> <span class="pg">{</span></div>
<div class="r" style="left:258px;top:767px;width:32px;color:#857b6f"> 52</div>
<div class="r" style="left:290px;top:767px;width:1368px">            charMatrix ch  = args<span class="pb">(</span><span class="n">0</span><span class="pb">)</span>.char_matrix_value <span class="pb">()</span>;</div>
<div class="r" style="left:258px;top:782px;width:32px;color:#857b6f"> 53</div>
<div class="r" style="left:290px;top:782px;width:1368px">            charMatrix ch2 = args<span class="pb">(</span><span class="n">1</span><span class="pb">)</span>.char_matrix_value <span class="pb">()</span>;</div>
<div class="r" style="left:258px;top:797px;width:32px;color:#857b6f"> 54</div>
<div class="r" style="left:258px;top:812px;width:32px;color:#857b6f"> 55</div>
<div class="r" style="left:290px;top:812px;width:1368px">            path           = ch.row_as_string  <span class="pb">(</span><span class="n">0</span><span class="pb">)</span>;</div>
<div class="r" style="left:258px;top:827px;width:32px;color:#857b6f"> 56</div>
<div class="r" style="left:290px;top:827px;width:1368px">            ext            = ch2.row_as_string <span class="pb">(</span><span class="n">0</span><span class="pb">)</span>;</div>
<div class="bx" style="left:2px;top:842px;width:248px;height:15px;background:#005f00"></div>
<div class="r" style="left:2px;top:842px;width:248px;color:#5faf00;font-weight:bold"> ~/Dokumente/octave/NERD_tree_&gt;</div>
<div class="bx" style="left:258px;top:842px;width:1400px;height:15px;background:#303030"></div>
<div class="bx" style="left:258px;top:842px;width:64px;height:15px;background:#afdf00"></div>
<div class="r" style="left:258px;top:842px;width:64px;color:#005f00;font-weight:bold"> NORMAL </div>
<div class="bx" style="left:322px;top:842px;width:104px;height:15px;background:#585858"></div>
<div class="r" style="left:322px;top:842px;width:8px;color:#afdf00">▶</div>
<div class="r" style="left:330px;top:842px;width:96px;color:#ffffff;font-weight:bold"> scandir.cc </div>
<div class="r" style="left:426px;top:842px;width:8px;color:#585858">▶</div>
<div class="r" style="left:1362px;top:842px;width:160px;color:#9e9e9e">unix ❮ utf-8 ❮ cpp</div>
<div class="r" style="left:1514px;top:842px;width:8px;color:#585858">◀</div>
<div class="bx" style="left:1522px;top:842px;width:56px;height:15px;background:#585858"></div>
<div class="r" style="left:1522px;top:842px;width:48px;color:#bcbcbc">  10% </div>
<div class="r" style="left:1570px;top:842px;width:8px;color:#d0d0d0">◀</div>
<div class="bx" style="left:1578px;top:842px;width:80px;height:15px;background:#d0d0d0"></div>
<div class="r" style="left:1578px;top:842px;width:80px;color:#303030"> ⁋  <b>13</b><span style="color:#808080">:63</span> </div>
</div>
</div></body></html>
